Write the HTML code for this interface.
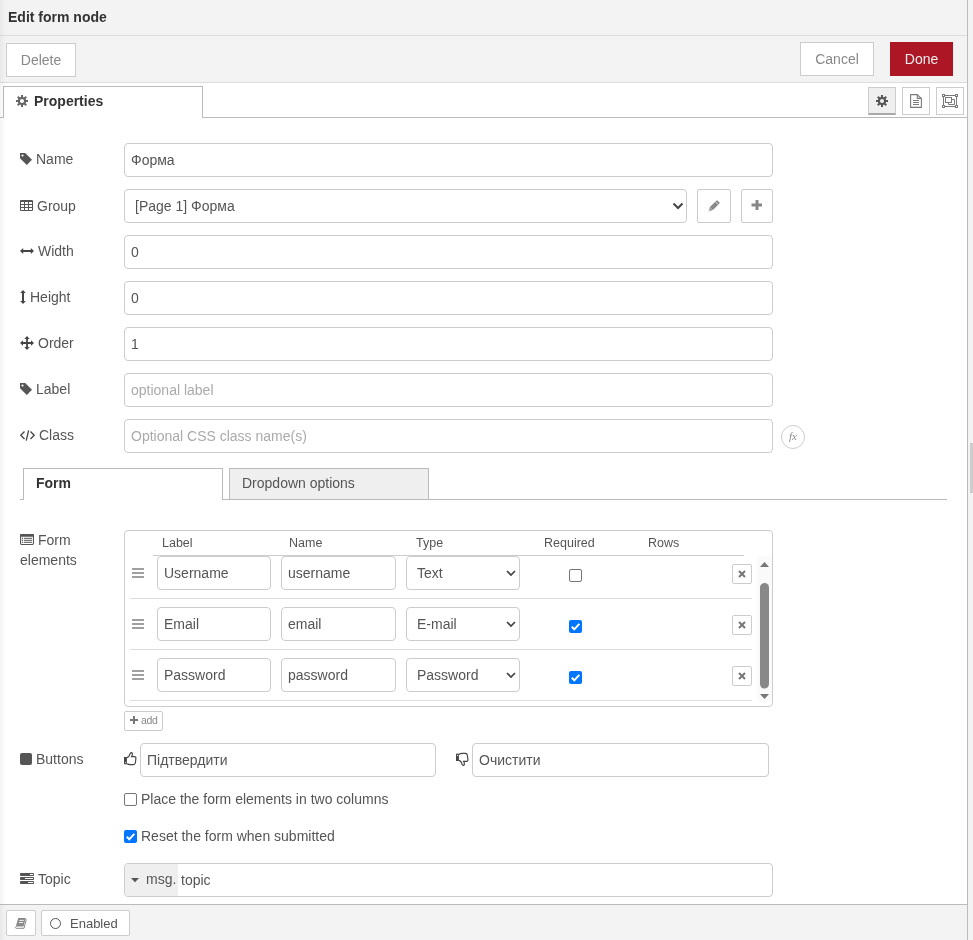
<!DOCTYPE html>
<html><head><meta charset="utf-8">
<style>
*{box-sizing:border-box;margin:0;padding:0}
html,body{width:973px;height:940px;overflow:hidden;background:#f3f3f3}
body{font-family:"Liberation Sans",sans-serif;font-size:14px;color:#555;position:relative}
.abs{position:absolute}
#tray{will-change:transform;position:absolute;left:0;top:0;width:968px;height:940px;background:#fff;border-right:1px solid #bbb}
#hdr{position:absolute;left:0;top:0;width:967px;height:36px;background:#f3f3f3;border-bottom:1px solid #ddd}
#hdr .t{position:absolute;left:8px;top:9px;font-weight:bold;color:#333;font-size:14px;line-height:16px}
#tb{position:absolute;left:0;top:36px;width:967px;height:47px;background:#f3f3f3;border-bottom:1px solid #ddd}
.btn{position:absolute;border:1px solid #ccc;background:#fff;color:#888;font-size:14px;text-align:center;border-radius:2px}
.primary{background:#AD1625;border-color:#AD1625;color:#eee}
#shadow{position:absolute;left:0;top:0;width:6px;height:940px;background:linear-gradient(to right,rgba(0,0,0,0.045),rgba(0,0,0,0))}
.lbl{position:absolute;font-size:14px;color:#555;line-height:16px;white-space:nowrap}
.inp{position:absolute;left:124px;width:649px;height:34px;border:1px solid #ccc;border-radius:4px;background:#fff;color:#555;padding-left:6px;line-height:32px;font-size:14px;white-space:nowrap}
.ph{color:#aaa}
.ico{position:absolute;overflow:visible}
.th{position:absolute;top:536px;font-size:12.5px;line-height:14px;color:#555}
.ci{position:absolute;height:34px;border:1px solid #ccc;border-radius:4px;background:#fff;padding-left:6px;line-height:32px;font-size:14px;color:#555}
.sel{position:absolute;left:406px;width:114px;height:34px;border:1px solid #ccc;border-radius:4px;background:#fff;padding-left:10px;line-height:32px;font-size:14px;color:#555}
.sep{position:absolute;left:130px;width:622px;height:1px;background:#ddd}
.handle{position:absolute;left:132px;width:12px;height:10px}
.handle i{position:absolute;left:0;width:12px;height:2px;background:#a0a0a0}
.cb{position:absolute;width:13px;height:13px;border:1px solid #767676;border-radius:2px;background:#fff}
.cbc{position:absolute;width:13px;height:13px;border-radius:2px;background:#0075ff}
.xbtn{position:absolute;left:732px;width:20px;height:20px;border:1px solid #ccc;border-radius:2px;background:#fff}
</style></head><body>
<div id="tray">
  <div id="hdr"><div class="t">Edit form node</div></div>
  <div id="tb">
    <div class="btn" style="border-radius:0;left:6px;top:7px;width:70px;height:34px;line-height:32px">Delete</div>
    <div class="btn" style="border-radius:0;left:800px;top:6px;width:74px;height:34px;line-height:32px">Cancel</div>
    <div class="btn primary" style="border-radius:0;left:890px;top:6px;width:63px;height:34px;line-height:32px">Done</div>
  </div>
  <!-- tabs -->
  <div class="abs" style="left:0;top:117px;width:967px;height:1px;background:#bbb"></div>
  <div class="abs" style="left:3px;top:86px;width:200px;height:32px;border:1px solid #bbb;border-bottom:none;background:#fff">
    <svg class="ico" style="left:12px;top:8px" width="12" height="12" viewBox="0 0 12 12"><g fill="#666"><circle cx="6" cy="6" r="4.1"/><rect x="5" y="0" width="2" height="3" transform="rotate(0 6 6)"/><rect x="5" y="0" width="2" height="3" transform="rotate(45 6 6)"/><rect x="5" y="0" width="2" height="3" transform="rotate(90 6 6)"/><rect x="5" y="0" width="2" height="3" transform="rotate(135 6 6)"/><rect x="5" y="0" width="2" height="3" transform="rotate(180 6 6)"/><rect x="5" y="0" width="2" height="3" transform="rotate(225 6 6)"/><rect x="5" y="0" width="2" height="3" transform="rotate(270 6 6)"/><rect x="5" y="0" width="2" height="3" transform="rotate(315 6 6)"/></g><circle cx="6" cy="6" r="2" fill="#fff"/></svg>
    <div class="abs" style="left:30px;top:6px;font-weight:bold;color:#333;line-height:16px">Properties</div>
  </div>
  <div class="btn" style="border-radius:0;left:868px;top:87px;width:28px;height:28px;background:#efefef;border-bottom:2px solid #aaa">
    <svg class="ico" style="left:7px;top:7px" width="12" height="12" viewBox="0 0 12 12"><g fill="#555"><circle cx="6" cy="6" r="4.1"/><rect x="5" y="0" width="2" height="3" transform="rotate(0 6 6)"/><rect x="5" y="0" width="2" height="3" transform="rotate(45 6 6)"/><rect x="5" y="0" width="2" height="3" transform="rotate(90 6 6)"/><rect x="5" y="0" width="2" height="3" transform="rotate(135 6 6)"/><rect x="5" y="0" width="2" height="3" transform="rotate(180 6 6)"/><rect x="5" y="0" width="2" height="3" transform="rotate(225 6 6)"/><rect x="5" y="0" width="2" height="3" transform="rotate(270 6 6)"/><rect x="5" y="0" width="2" height="3" transform="rotate(315 6 6)"/></g><circle cx="6" cy="6" r="2" fill="#efefef"/></svg>
  </div>
  <div class="btn" style="border-radius:0;left:902px;top:87px;width:28px;height:28px">
    <svg class="ico" style="left:7px;top:6px" width="12" height="14" viewBox="0 0 12 14"><g fill="none" stroke="#7a7a7a" stroke-width="1.1"><path d="M0.6 0.6 H7.3 L11.4 4.7 V13.4 H0.6 Z" stroke-linejoin="round"/><path d="M7.3 0.6 V4.4 H11.4"/><path d="M3 6.5 H9 M3 8.5 H9 M3 10.5 H9"/></g></svg>
  </div>
  <div class="btn" style="border-radius:0;left:936px;top:87px;width:28px;height:28px">
    <svg class="ico" style="left:4px;top:5px" width="18" height="16" viewBox="0 0 18 16"><g fill="none" stroke="#7a7a7a" stroke-width="1"><path d="M4 2.5 H14 M4 13.5 H14 M2.5 4 V12 M15.5 4 V12"/><rect x="1.5" y="1.5" width="2" height="2"/><rect x="14.5" y="1.5" width="2" height="2"/><rect x="1.5" y="12.5" width="2" height="2"/><rect x="14.5" y="12.5" width="2" height="2"/><rect x="4.5" y="4.5" width="6" height="5"/><path d="M10.5 6.5 H13.5 V11.5 H7.5 V9.5"/></g></svg>
  </div>

  <!-- rows -->
  <svg class="ico" style="left:20px;top:153px" width="12" height="12" viewBox="0 0 12 12"><path d="M0 0 H5.2 L12 6.8 L6.8 12 L0 5.2 Z" fill="#555"/><circle cx="2.5" cy="2.5" r="1.1" fill="#fff"/></svg>
  <div class="lbl" style="left:36px;top:151px">Name</div>
  <div class="inp" style="top:143px">Форма</div>

  <svg class="ico" style="left:20px;top:200px" width="13" height="11" viewBox="0 0 13 11"><rect x="0" y="0" width="13" height="11" rx="1" fill="#555"/><g fill="#fff"><rect x="1" y="2" width="3" height="2"/><rect x="1" y="5" width="3" height="2"/><rect x="1" y="8" width="3" height="2"/><rect x="5" y="2" width="3" height="2"/><rect x="5" y="5" width="3" height="2"/><rect x="5" y="8" width="3" height="2"/><rect x="9" y="2" width="3" height="2"/><rect x="9" y="5" width="3" height="2"/><rect x="9" y="8" width="3" height="2"/></g></svg>
  <div class="lbl" style="left:37px;top:198px">Group</div>
  <div class="inp" style="top:189px;width:563px;padding-left:10px">[Page 1] Форма</div>
  <svg class="ico" style="left:672px;top:201px" width="12" height="10" viewBox="0 0 12 10"><path d="M1.5 2.5 L6 7 L10.5 2.5" fill="none" stroke="#444" stroke-width="2"/></svg>
  <div class="btn" style="left:697px;top:189px;width:34px;height:34px;border-radius:2px">
    <svg class="ico" style="left:10px;top:10px" width="12" height="12" viewBox="0 0 12 12"><path d="M0.6 11.4 L1.9 7.1 L8.3 0.7 Q9 0 9.7 0.7 L11.3 2.3 Q12 3 11.3 3.7 L4.9 10.1 Z" fill="#888"/><path d="M7.4 1.6 L10.4 4.6" stroke="#fff" stroke-width="0.7"/><path d="M2.2 7.6 L4.4 9.8" stroke="#fff" stroke-width="0.5"/><circle cx="1.9" cy="10.1" r="0.6" fill="#fff"/></svg>
  </div>
  <div class="btn" style="left:741px;top:189px;width:32px;height:34px;border-radius:2px">
    <svg class="ico" style="left:9px;top:10px" width="12" height="11" viewBox="0 0 12 11"><path d="M6 0 V10 M0.5 5 H11" stroke="#888" stroke-width="3"/></svg>
  </div>

  <svg class="ico" style="left:20px;top:248px" width="14" height="6" viewBox="0 0 14 6"><path d="M0 3 L3.2 0 V2 H10.8 V0 L14 3 L10.8 6 V4 H3.2 V6 Z" fill="#444"/></svg>
  <div class="lbl" style="left:38px;top:243px">Width</div>
  <div class="inp" style="top:235px">0</div>

  <svg class="ico" style="left:20px;top:290px" width="6" height="14" viewBox="0 0 6 14"><path d="M3 0 L5.8 3 H4 V11 H5.8 L3 14 L0.2 11 H2 V3 H0.2 Z" fill="#444"/></svg>
  <div class="lbl" style="left:30px;top:289px">Height</div>
  <div class="inp" style="top:281px">0</div>

  <svg class="ico" style="left:20px;top:336px" width="14" height="14" viewBox="0 0 14 14"><path d="M7 0 L9.7 3 H7.9 V6.1 H11 V4.3 L14 7 L11 9.7 V7.9 H7.9 V11 H9.7 L7 14 L4.3 11 H6.1 V7.9 H3 V9.7 L0 7 L3 4.3 V6.1 H6.1 V3 H4.3 Z" fill="#444"/></svg>
  <div class="lbl" style="left:38px;top:335px">Order</div>
  <div class="inp" style="top:327px">1</div>

  <svg class="ico" style="left:20px;top:383px" width="12" height="12" viewBox="0 0 12 12"><path d="M0 0 H5.2 L12 6.8 L6.8 12 L0 5.2 Z" fill="#555"/><circle cx="2.5" cy="2.5" r="1.1" fill="#fff"/></svg>
  <div class="lbl" style="left:36px;top:381px">Label</div>
  <div class="inp ph" style="top:373px">optional label</div>

  <svg class="ico" style="left:20px;top:430px" width="15" height="11" viewBox="0 0 15 11"><g fill="none" stroke="#444" stroke-width="1.3"><path d="M4.5 1.5 L0.8 5.3 L4.5 9"/><path d="M10.5 1.5 L14.2 5.3 L10.5 9"/><path d="M8.6 0.3 L6.2 10.7"/></g></svg>
  <div class="lbl" style="left:39px;top:427px">Class</div>
  <div class="inp ph" style="top:419px">Optional CSS class name(s)</div>
  <div class="abs" style="left:781px;top:425px;width:24px;height:24px;border:1px solid #ccc;border-radius:50%;font-family:'Liberation Serif',serif;font-style:italic;font-size:11px;color:#888;text-align:center;line-height:20px">fx</div>

  <!-- form tabs -->
  <div class="abs" style="left:20px;top:499px;width:927px;height:1px;background:#bbb"></div>
  <div class="abs" style="left:23px;top:468px;width:200px;height:32px;border:1px solid #bbb;border-bottom:none;background:#fff">
    <div class="abs" style="left:12px;top:6px;font-weight:bold;color:#333;line-height:16px">Form</div>
  </div>
  <div class="abs" style="left:229px;top:468px;width:200px;height:31px;border:1px solid #bbb;border-bottom:none;background:#efefef">
    <div class="abs" style="left:12px;top:6px;color:#555;line-height:16px">Dropdown options</div>
  </div>

  <!-- form elements -->
  <svg class="ico" style="left:20px;top:534px" width="14" height="11" viewBox="0 0 14 11"><g fill="#555"><rect x="0" y="0" width="14" height="2.8" rx="1"/></g><g fill="none" stroke="#555" stroke-width="1.1"><rect x="0.55" y="0.8" width="12.9" height="9.65" rx="0.9"/></g><g fill="#555"><circle cx="2.5" cy="4.3" r="0.7"/><circle cx="2.5" cy="6.3" r="0.7"/><circle cx="2.5" cy="8.3" r="0.7"/><rect x="4" y="3.8" width="8" height="1"/><rect x="4" y="5.8" width="8" height="1"/><rect x="4" y="7.8" width="8" height="1"/></g></svg>
  <div class="lbl" style="left:38px;top:532px">Form</div>
  <div class="lbl" style="left:20px;top:552px">elements</div>

  <div class="abs" style="left:124px;top:530px;width:649px;height:177px;border:1px solid #ccc;border-radius:4px;background:#fff"></div>
  <div class="th" style="left:162px">Label</div>
  <div class="th" style="left:289px">Name</div>
  <div class="th" style="left:416px">Type</div>
  <div class="th" style="left:544px">Required</div>
  <div class="th" style="left:648px">Rows</div>
  <div class="abs" style="left:153px;top:555px;width:591px;height:1px;background:#ccc"></div>

  <!-- row 1 -->
  <div class="handle" style="top:568px"><i style="top:0"></i><i style="top:4px"></i><i style="top:8px"></i></div>
  <div class="ci" style="left:157px;top:556px;width:114px">Username</div>
  <div class="ci" style="left:281px;top:556px;width:115px">username</div>
  <div class="sel" style="top:556px">Text</div>
  <svg class="ico" style="left:506px;top:569px" width="10" height="8" viewBox="0 0 10 8"><path d="M1 2 L5 6 L9 2" fill="none" stroke="#444" stroke-width="1.7"/></svg>
  <div class="cb" style="left:569px;top:569px"></div>
  <div class="xbtn" style="top:564px"><svg class="ico" style="left:5px;top:5px" width="8" height="8" viewBox="0 0 8 8"><path d="M1 1 L7 7 M7 1 L1 7" stroke="#777" stroke-width="2"/></svg></div>
  <div class="sep" style="top:598px"></div>

  <!-- row 2 -->
  <div class="handle" style="top:619px"><i style="top:0"></i><i style="top:4px"></i><i style="top:8px"></i></div>
  <div class="ci" style="left:157px;top:607px;width:114px">Email</div>
  <div class="ci" style="left:281px;top:607px;width:115px">email</div>
  <div class="sel" style="top:607px">E-mail</div>
  <svg class="ico" style="left:506px;top:620px" width="10" height="8" viewBox="0 0 10 8"><path d="M1 2 L5 6 L9 2" fill="none" stroke="#444" stroke-width="1.7"/></svg>
  <div class="cbc" style="left:569px;top:620px"><svg class="ico" style="left:0;top:0" width="13" height="13" viewBox="0 0 13 13"><path d="M2.8 6.8 L5.3 9.3 L10.3 3.8" fill="none" stroke="#fff" stroke-width="2"/></svg></div>
  <div class="xbtn" style="top:615px"><svg class="ico" style="left:5px;top:5px" width="8" height="8" viewBox="0 0 8 8"><path d="M1 1 L7 7 M7 1 L1 7" stroke="#777" stroke-width="2"/></svg></div>
  <div class="sep" style="top:649px"></div>

  <!-- row 3 -->
  <div class="handle" style="top:670px"><i style="top:0"></i><i style="top:4px"></i><i style="top:8px"></i></div>
  <div class="ci" style="left:157px;top:658px;width:114px">Password</div>
  <div class="ci" style="left:281px;top:658px;width:115px">password</div>
  <div class="sel" style="top:658px">Password</div>
  <svg class="ico" style="left:506px;top:671px" width="10" height="8" viewBox="0 0 10 8"><path d="M1 2 L5 6 L9 2" fill="none" stroke="#444" stroke-width="1.7"/></svg>
  <div class="cbc" style="left:569px;top:671px"><svg class="ico" style="left:0;top:0" width="13" height="13" viewBox="0 0 13 13"><path d="M2.8 6.8 L5.3 9.3 L10.3 3.8" fill="none" stroke="#fff" stroke-width="2"/></svg></div>
  <div class="xbtn" style="top:666px"><svg class="ico" style="left:5px;top:5px" width="8" height="8" viewBox="0 0 8 8"><path d="M1 1 L7 7 M7 1 L1 7" stroke="#777" stroke-width="2"/></svg></div>
  <div class="sep" style="top:700px"></div>

  <!-- scrollbar -->
  <div class="abs" style="left:757px;top:556px;width:15px;height:145px;background:#fafafa"></div>
  <svg class="ico" style="left:757px;top:556px" width="15" height="145" viewBox="0 0 15 145"><path d="M3 11 L7.5 6 L12 11 Z" fill="#777"/><path d="M3 138 L7.5 143 L12 138 Z" fill="#777"/><rect x="3" y="27" width="9" height="105.5" rx="4.5" fill="#888"/></svg>

  <div class="btn" style="left:124px;top:711px;width:39px;height:20px;border-radius:2px;font-size:10.5px;line-height:17px;color:#888;letter-spacing:-0.3px;text-align:left;padding-left:16px">add</div>
  <svg class="ico" style="left:130px;top:716px" width="8" height="8" viewBox="0 0 8 8"><path d="M4 0 V8 M0 4 H8" stroke="#777" stroke-width="2"/></svg>

  <!-- buttons row -->
  <div class="abs" style="left:20px;top:753px;width:12px;height:12px;background:#555;border-radius:2px"></div>
  <div class="lbl" style="left:36px;top:751px">Buttons</div>
  <svg class="ico" style="left:124px;top:752px" width="13" height="14" viewBox="0 0 13 14"><path d="M0 5 H2.9 V12.3 H0 Z" fill="#444"/><circle cx="1.4" cy="10.6" r="0.55" fill="#fff"/><path d="M2.9 5.6 C4.6 5.3 5.6 3.6 6.1 1.6 C6.4 0.5 7.9 0.3 8.3 1.5 C8.6 2.6 8.2 3.6 7.6 4.6 H10.6 C11.6 4.6 12 5.4 11.9 6.2 L11.4 10.6 C11.2 12 10.4 12.6 9.4 12.6 H6 C4.6 12.6 3.9 12 2.9 11.8" fill="none" stroke="#444" stroke-width="1.15"/></svg>
  <div class="inp" style="left:140px;top:743px;width:296px;height:34px">Підтвердити</div>
  <svg class="ico" style="left:456px;top:753px" width="13" height="14" viewBox="0 0 13 14"><g transform="translate(0,13) scale(1,-1)"><path d="M0 5 H2.9 V12.3 H0 Z" fill="#444"/><circle cx="1.4" cy="10.6" r="0.55" fill="#fff"/><path d="M2.9 5.6 C4.6 5.3 5.6 3.6 6.1 1.6 C6.4 0.5 7.9 0.3 8.3 1.5 C8.6 2.6 8.2 3.6 7.6 4.6 H10.6 C11.6 4.6 12 5.4 11.9 6.2 L11.4 10.6 C11.2 12 10.4 12.6 9.4 12.6 H6 C4.6 12.6 3.9 12 2.9 11.8" fill="none" stroke="#444" stroke-width="1.15"/></g></svg>
  <div class="inp" style="left:472px;top:743px;width:297px;height:34px">Очистити</div>

  <div class="cb" style="left:124px;top:793px"></div>
  <div class="lbl" style="left:141px;top:791px">Place the form elements in two columns</div>
  <div class="cbc" style="left:124px;top:830px"><svg class="ico" style="left:0;top:0" width="13" height="13" viewBox="0 0 13 13"><path d="M2.8 6.8 L5.3 9.3 L10.3 3.8" fill="none" stroke="#fff" stroke-width="2"/></svg></div>
  <div class="lbl" style="left:141px;top:828px">Reset the form when submitted</div>

  <!-- topic -->
  <svg class="ico" style="left:20px;top:873px" width="14" height="11" viewBox="0 0 14 11"><g fill="#555"><rect x="0" y="0" width="14" height="3" rx="0.8"/><rect x="0" y="4" width="14" height="3" rx="0.8"/><rect x="0" y="8" width="14" height="3" rx="0.8"/></g><g fill="#fff"><rect x="10" y="1" width="3" height="1"/><rect x="5" y="5" width="8" height="1"/><rect x="8" y="9" width="5" height="1"/></g></svg>
  <div class="lbl" style="left:38px;top:871px">Topic</div>
  <div class="inp" style="top:863px;padding-left:0;overflow:hidden">
    <div class="abs" style="left:0;top:0;width:53px;height:32px;background:#efefef"></div>
    <svg class="ico" style="left:6px;top:14px" width="8" height="5" viewBox="0 0 8 5"><path d="M0 0 H8 L4 4.3 Z" fill="#555"/></svg>
    <div class="abs" style="left:21px;top:-1px;line-height:32px;color:#555">msg.</div>
    <div class="abs" style="left:56px;top:0;line-height:32px;color:#555">topic</div>
  </div>

  <!-- footer -->
  <div class="abs" style="left:0;top:904px;width:967px;height:36px;background:#f3f3f3;border-top:1px solid #bbb"></div>
  <div class="btn" style="left:6px;top:910px;width:30px;height:26px"></div>
  <svg class="ico" style="left:15px;top:918px" width="13" height="12" viewBox="0 0 13 12"><path d="M3.2 0.1 H10.8 L8.5 8.6 H0.8 Z" fill="#888"/><path d="M1 8.7 C0.2 9.2 0.4 10.3 1.3 10.3 H9 L11.1 2.3 C11.3 1.6 11.1 1.1 10.7 0.9" fill="none" stroke="#888" stroke-width="1"/><path d="M4.3 2.4 H8.8 M3.9 4.6 H8.1" stroke="#fff" stroke-width="0.9"/></svg>
  <div class="btn" style="left:41px;top:910px;width:89px;height:26px;color:#555;font-size:13px;line-height:25px;text-align:left;padding-left:28px">Enabled</div>
  <div class="abs" style="left:50px;top:918px;width:11px;height:11px;border:1.3px solid #555;border-radius:50%"></div>

  <div id="shadow"></div>
</div>
<div class="abs" style="left:970px;top:443px;width:3px;height:50px;background:#ccc"></div>
</body></html>
